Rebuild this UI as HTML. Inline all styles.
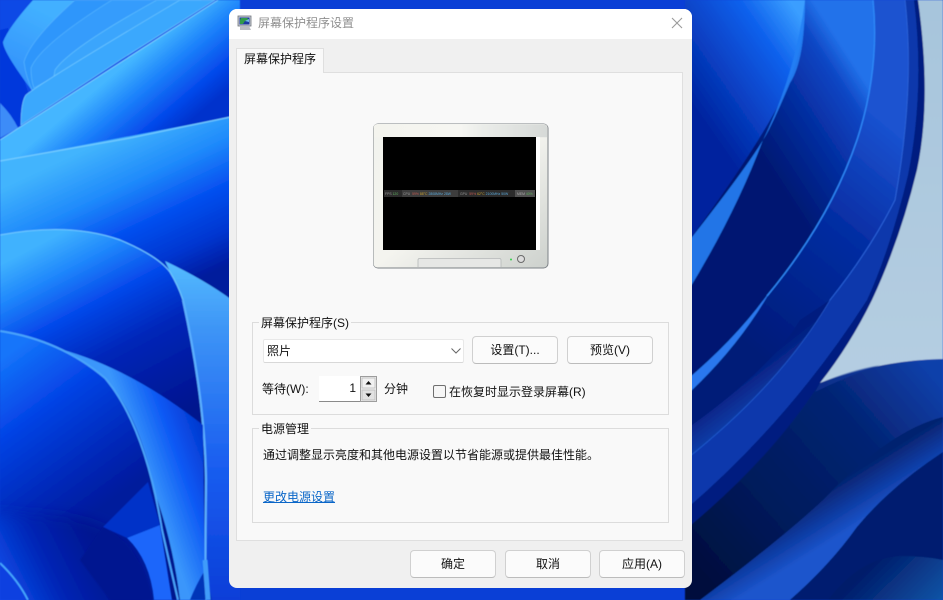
<!DOCTYPE html>
<html lang="zh-CN"><head><meta charset="utf-8"><title>屏幕保护程序设置</title>
<style>
*{box-sizing:border-box;margin:0;padding:0}
html,body{width:943px;height:600px;overflow:hidden;background:#0a3fd0}
body{position:relative;font:12px/16px "Liberation Sans","Noto Sans CJK SC",sans-serif;color:#111}
.a{position:absolute;white-space:nowrap}
#bg{position:absolute;left:0;top:0}
#win{position:absolute;left:229px;top:9px;width:463px;height:579px;background:#f0f0f0;border-radius:8px;overflow:hidden}
#tb{position:absolute;left:0;top:0;width:463px;height:30px;background:#fff}
#panel{position:absolute;left:236px;top:72px;width:447px;height:469px;background:#f9f9f9;border:1px solid #dfdfdf}
#tab{position:absolute;left:236px;top:48px;width:88px;height:25px;background:#f9f9f9;border:1px solid #dfdfdf;border-bottom:0;z-index:2;text-align:center;line-height:21px;color:#111}
.grp{position:absolute;border:1px solid #dcdcdc}
.lg{position:absolute;background:#f9f9f9;padding:0 2px;height:16px;line-height:16px}
.btn{position:absolute;width:86px;height:28px;background:#fbfbfb;border:1px solid #d0d0d0;border-bottom-color:#bcbcbc;border-radius:4px;text-align:center;line-height:26px;color:#111}
</style></head><body>
<svg id="bg" width="943" height="600" viewBox="0 0 943 600" xmlns="http://www.w3.org/2000/svg">
<defs>
<linearGradient id="g1" gradientUnits="userSpaceOnUse" x1="125" y1="65" x2="180" y2="130"><stop offset="0" stop-color="#44b6ff"/><stop offset=".35" stop-color="#1c82fb"/><stop offset=".75" stop-color="#0448ea"/><stop offset="1" stop-color="#0232cc"/></linearGradient>
<linearGradient id="g2" gradientUnits="userSpaceOnUse" x1="95" y1="145" x2="165" y2="295"><stop offset="0" stop-color="#42b4fd"/><stop offset=".3" stop-color="#1f8afb"/><stop offset=".55" stop-color="#0550f0"/><stop offset=".8" stop-color="#0336d0"/><stop offset="1" stop-color="#021a9c"/></linearGradient>
<linearGradient id="g3" gradientUnits="userSpaceOnUse" x1="70" y1="228" x2="170" y2="420"><stop offset="0" stop-color="#40b2fe"/><stop offset=".16" stop-color="#2088fc"/><stop offset=".36" stop-color="#0548ea"/><stop offset=".6" stop-color="#0226b8"/><stop offset="1" stop-color="#01148e"/></linearGradient>
<linearGradient id="g4" gradientUnits="userSpaceOnUse" x1="35" y1="335" x2="140" y2="480"><stop offset="0" stop-color="#1474fa"/><stop offset=".35" stop-color="#0544e6"/><stop offset=".75" stop-color="#0228b8"/><stop offset="1" stop-color="#011a9c"/></linearGradient>
<linearGradient id="g6" gradientUnits="userSpaceOnUse" x1="130" y1="430" x2="200" y2="405"><stop offset="0" stop-color="#3a96fb"/><stop offset=".5" stop-color="#0c58f4"/><stop offset="1" stop-color="#0232c8"/></linearGradient>
<linearGradient id="g7" gradientUnits="userSpaceOnUse" x1="200" y1="263" x2="200" y2="600"><stop offset="0" stop-color="#54baff"/><stop offset=".2" stop-color="#3d94f6"/><stop offset=".6" stop-color="#1a5ef0"/><stop offset="1" stop-color="#0a3ed8"/></linearGradient>
<linearGradient id="nvb" gradientUnits="userSpaceOnUse" x1="5" y1="590" x2="95" y2="545"><stop offset="0" stop-color="#0a4ce8"/><stop offset=".5" stop-color="#0224b4"/><stop offset="1" stop-color="#011690"/></linearGradient>
<linearGradient id="p1" gradientUnits="userSpaceOnUse" x1="60" y1="20" x2="20" y2="100"><stop offset="0" stop-color="#42b0ff"/><stop offset="1" stop-color="#2f8afb"/></linearGradient>
<linearGradient id="r1" gradientUnits="userSpaceOnUse" x1="810" y1="30" x2="695" y2="110"><stop offset="0" stop-color="#3a9eff"/><stop offset=".3" stop-color="#0e60ec"/><stop offset="1" stop-color="#02239e"/></linearGradient>
<linearGradient id="r2" gradientUnits="userSpaceOnUse" x1="878" y1="100" x2="770" y2="170"><stop offset="0" stop-color="#2272ea"/><stop offset=".18" stop-color="#0e46c4"/><stop offset=".5" stop-color="#0630a4"/><stop offset="1" stop-color="#021872"/></linearGradient>
<linearGradient id="r3" gradientUnits="userSpaceOnUse" x1="905" y1="140" x2="740" y2="340"><stop offset="0" stop-color="#1a52d0"/><stop offset=".4" stop-color="#062ea4"/><stop offset="1" stop-color="#021a78"/></linearGradient>
<linearGradient id="r4" gradientUnits="userSpaceOnUse" x1="750" y1="430" x2="720" y2="390"><stop offset="0" stop-color="#1a58cc"/><stop offset="1" stop-color="#031c7c"/></linearGradient>
<linearGradient id="sky" x1="0" y1="0" x2="0" y2="1"><stop offset="0" stop-color="#a7c5dc"/><stop offset="1" stop-color="#bdd3e5"/></linearGradient>
<linearGradient id="nv" gradientUnits="userSpaceOnUse" x1="930" y1="370" x2="700" y2="570"><stop offset="0" stop-color="#0d40aa"/><stop offset=".3" stop-color="#052474"/><stop offset=".7" stop-color="#031a5a"/><stop offset="1" stop-color="#020f3e"/></linearGradient>
<linearGradient id="st" gradientUnits="userSpaceOnUse" x1="825" y1="490" x2="850" y2="530"><stop offset="0" stop-color="#05236f"/><stop offset=".5" stop-color="#0d3aa0"/><stop offset="1" stop-color="#1c55cc"/></linearGradient>
<linearGradient id="dm" gradientUnits="userSpaceOnUse" x1="880" y1="555" x2="935" y2="610"><stop offset="0" stop-color="#031c6a"/><stop offset="1" stop-color="#0e56a8"/></linearGradient>
<linearGradient id="mon" x1="0" y1="0" x2="1" y2="1"><stop offset="0" stop-color="#f2f3ee"/><stop offset=".5" stop-color="#f4f4ef"/><stop offset="1" stop-color="#cdd1cd"/></linearGradient>
<linearGradient id="mt" x1="0" y1="0" x2="1" y2="0"><stop offset="0" stop-color="#f4f4ee"/><stop offset=".5" stop-color="#f6f6f2"/><stop offset=".62" stop-color="#ebedea"/><stop offset="1" stop-color="#d6d9d7"/></linearGradient>
<filter id="b1" x="-5%" y="-5%" width="110%" height="110%"><feGaussianBlur stdDeviation="0.5"/></filter>
<filter id="b2" x="-20%" y="-20%" width="140%" height="140%"><feGaussianBlur stdDeviation="6"/></filter>
</defs>
<rect width="943" height="600" fill="#0a3fd6"/>
<g filter="url(#b1)">
<!-- top-left -->
<rect width="240" height="170" fill="#0a48e6"/>
<path d="M0 30 L8 28 L28 92 L20 128 L0 110Z" fill="#0538dc"/>
<path d="M0 103 Q12 115 18 128 L0 138Z" fill="#3d8cf8"/>
<path d="M33 0 Q8 28 3 42 Q3 52 33 92 L60 60 L110 0Z" fill="url(#p1)"/>
<path d="M75 0 Q30 40 24 62 Q26 78 33 92 L80 60 L150 0Z" fill="#2f96fb" stroke="#55b4ff" stroke-width=".7"/>
<path d="M112 0 Q40 45 31 68 Q31 80 34 88 L120 40 L185 0Z" fill="#349cfc" stroke="#56b6ff" stroke-width=".7"/>
<path d="M157 0 Q70 48 55 70 L54 76 L150 30 L200 0Z" fill="#3aa5fc" stroke="#62c0ff" stroke-width=".7"/>
<path d="M180 0 Q45 80 26 95 Q21 102 21 125 L120 60 L215 0Z" fill="#3ba8fd" stroke="#70c8ff" stroke-width=".7"/>
<!-- petal 1 -->
<path d="M0 140 L218 0 L240 0 L240 117 L0 161Z" fill="url(#g1)"/>
<path d="M0 140 L218 0" stroke="#7ad0ff" stroke-width="1" fill="none"/>
<!-- petal 2 -->
<path d="M0 161 L240 115 L240 320 L0 320Z" fill="url(#g2)"/>
<path d="M0 161 L130 138 L240 115" stroke="#74ccff" stroke-width="1.2" fill="none"/>
<!-- right wedge -->
<path d="M165 261 Q205 280 232 300 L240 310 L240 600 L200 600 L183 300Z" fill="url(#g7)"/>
<!-- dome 3 -->
<path d="M0 235 Q70 222 120 240 Q158 256 170 272 Q178 285 183 300 Q205 400 205 480 L205 600 L0 600Z" fill="url(#g3)"/>
<path d="M0 235 Q70 222 120 240 Q158 256 170 272 Q178 285 183 300" stroke="#6cc6ff" stroke-width="1.2" fill="none"/>
<path d="M183 300 Q205 400 206 480 L205 600" stroke="#5cb0ff" stroke-width="2.2" fill="none"/>
<!-- inner wedge -->
<path d="M60 349 Q130 368 203 425 L205 600 L180 600 Q160 440 60 349Z" fill="url(#g6)"/>
<!-- dome 4 -->
<path d="M0 331 Q60 340 105 378 Q145 420 160 520 L168 600 L0 600Z" fill="url(#g4)"/>
<path d="M0 331 Q60 340 105 378 Q145 425 162 530 L178 600" stroke="#4aa4fb" stroke-width="2" fill="none"/>
</g>
<path d="M-30 515 Q70 510 103 527 L127 538 Q150 560 154 630 L-30 630Z" fill="url(#nvb)" filter="url(#b2)"/>
<g filter="url(#b1)">
<path d="M103 527 L148 482 L160 525 L127 538Z" fill="#0530c8"/>
<path d="M127 538 L160 525 L172 600 L154 600 Q150 560 127 538Z" fill="#1a66fa"/>
<path d="M103 527 Q140 545 153 600 L110 600 L80 560Z" fill="#011690"/>
<path d="M0 563 Q20 585 27 600 L0 600Z" fill="#0a40e0"/>
<path d="M0 563 Q18 580 28 600" stroke="#45a4fb" stroke-width="2" fill="none"/>
<path d="M190 600 Q196 585 205 570 L212 600Z" fill="#0636b8"/>
<path d="M205 560 Q207 585 208 600" stroke="#3f9cfa" stroke-width="5" fill="none"/>
<!-- right side -->
<rect x="685" y="0" width="258" height="600" fill="url(#sky)"/>
<path d="M918 0 Q932 100 917 170 Q900 240 872 300 Q850 345 820 383 L790 600 L685 600 L685 0Z" fill="#031f80"/>
<path d="M914 0 Q925 90 908 175 Q890 250 867 300 Q790 420 685 510 L685 0Z" fill="#0a39ac"/>
<path d="M905 0 Q915 90 895 200 Q870 250 830 300 Q780 385 685 460 L685 0Z" fill="url(#r3)"/>
<path d="M905 0 Q915 90 895 200 Q870 250 830 300 Q780 385 685 460" stroke="#2a62d8" stroke-width="1" fill="none"/>
<path d="M830 300 Q780 385 685 460 L685 430 Q770 370 800 320Z" fill="url(#r4)" opacity=".8"/>
<path d="M873 0 Q880 70 857 140 Q830 220 767 296 Q730 345 685 395 L685 0Z" fill="url(#r2)"/>
<path d="M873 0 Q880 70 857 140 Q830 220 767 296" stroke="#2e88f8" stroke-width="1.4" fill="none"/>
<path d="M767 296 Q735 340 685 382 L685 396 Q735 350 767 296Z" fill="#2a78ee" stroke="#2a78ee" stroke-width="1"/>
<path d="M805 0 Q805 60 773 115 Q745 165 685 246 L685 0Z" fill="url(#r1)"/>
<path d="M805 0 Q805 60 790 83 Q770 130 763 140 Q745 170 685 246 L685 296 Q735 215 763 140 Q795 75 805 0Z" fill="#2480f4" opacity=".9"/>
<!-- navy -->
<path d="M820 383 Q880 360 943 359 L943 600 L685 600 L685 530 Q770 460 820 383Z" fill="url(#nv)"/>
<path d="M820 383 Q850 370 880 365 Q850 375 815 392Z" fill="#0b3aa0" opacity=".5"/>
<path d="M943 417 Q890 430 823 500 Q780 540 700 600 L790 600 Q830 565 857 527 Q890 487 943 452Z" fill="url(#st)"/>
<path d="M943 452 Q890 487 857 527 Q830 565 790 600 L943 600Z" fill="#031c70"/>
<path d="M828 600 Q860 558 900 556 Q925 556 943 560 L943 600Z" fill="url(#dm)"/>
</g>
</svg>

<div id="win"><div id="tb"></div></div>

<svg class="a" style="left:237px;top:15px" width="16" height="17" viewBox="0 0 16 17">
<rect x="1" y="1" width="13" height="10" fill="#c6cad2" stroke="#6f747c" stroke-width=".8"/>
<rect x="2.500" y="2.500" width="10" height="7" fill="#1a38a0"/>
<path d="M4 3h6l2 2-4 1-2 3H3V5z" fill="#2f9a4a"/>
<path d="M8 6l4-2v3z" fill="#6fb9e8"/>
<path d="M3 11l9 0 2 4H3z" fill="#b8bcc2"/>
</svg>
<div class="a" style="left:258px;top:15px;color:#8f8f8f;line-height:17px">屏幕保护程序设置</div>
<svg class="a" style="left:671px;top:17px" width="12" height="12" viewBox="0 0 12 12"><path d="M1 1l10 10M11 1L1 11" stroke="#9a9a9a" stroke-width="1.1" fill="none"/></svg>

<div id="panel"></div>
<div id="tab">屏幕保护程序</div>

<svg class="a" style="left:372px;top:122px" width="178" height="148" viewBox="372 122 178 148" font-family="Liberation Sans" font-size="3.4">
<rect x="373" y="123.500" width="175.500" height="145" rx="5" fill="#7d8287"/>
<rect x="373.500" y="124" width="174" height="143.500" rx="4" fill="url(#mon)"/>
<path d="M378 124.300h165q4 0 4 4v9H373.800v-9q0-4 4-4z" fill="url(#mt)"/>
<rect x="383" y="137" width="153" height="113" fill="#000"/>
<rect x="536" y="137" width="4" height="113" fill="#fdfdfd"/>
<rect x="384" y="190" width="18" height="7" fill="#2c2c2c"/>
<rect x="402" y="190" width="56" height="7" fill="#3d3d3d"/>
<rect x="458" y="190" width="57" height="7" fill="#2c2c2c"/>
<rect x="515" y="190" width="20" height="7" fill="#505050"/>
<text x="385" y="195" fill="#999">FPS <tspan fill="#5fb05f">120</tspan></text>
<text x="403" y="195" fill="#999">CPU <tspan dx="1" fill="#c05a50">59%</tspan><tspan dx="1" fill="#c8a030">88°C</tspan><tspan dx="1" fill="#5aa8d8">2808MHz</tspan><tspan dx="1" fill="#5aa8d8">28W</tspan></text>
<text x="460" y="195" fill="#999">GPU <tspan dx="1" fill="#c05a50">59%</tspan><tspan dx="1" fill="#c8a030">62°C</tspan><tspan dx="1" fill="#5aa8d8">2100MHz</tspan><tspan dx="1" fill="#5aa8d8">50W</tspan></text>
<text x="517" y="195" fill="#aaa">MEM <tspan fill="#5fb05f">40%</tspan></text>
<path d="M418 267v-7q0-1.500 1.500-1.500h80q1.500 0 1.500 1.500v7" fill="#e6e7e5" stroke="#b5b8b8" stroke-width=".8"/>
<circle cx="511" cy="259.500" r="1" fill="#35d04a"/>
<circle cx="521" cy="259" r="3.500" fill="#dcdcdc" stroke="#6a6a6a" stroke-width="1"/>
</svg>

<div class="grp" style="left:252px;top:322px;width:417px;height:93px"></div>
<div class="lg" style="left:259px;top:315px">屏幕保护程序(S)</div>

<div class="a" style="left:263px;top:339px;width:201px;height:24px;background:#fff;border:1px solid #e8e8e8;border-bottom-color:#d8d8d8;border-radius:2px;padding-left:3px;line-height:22px">照片</div>
<svg class="a" style="left:450px;top:347px" width="12" height="8" viewBox="0 0 12 8"><path d="M1.500 1.500L6 6l4.500-4.500" stroke="#666" stroke-width="1" fill="none"/></svg>
<div class="btn" style="left:472px;top:336px">设置(T)...</div>
<div class="btn" style="left:567px;top:336px">预览(V)</div>

<div class="a" style="left:262px;top:381px">等待(W):</div>
<div class="a" style="left:319px;top:376px;width:41px;height:26px;background:#fff;border-bottom:1px solid #8a8a8a;text-align:right;padding-right:4px;line-height:24px">1</div>
<svg class="a" style="left:360px;top:376px" width="17" height="26" viewBox="0 0 17 26">
<rect x=".5" y=".5" width="16" height="25" fill="#eee" stroke="#9d9d9d"/>
<rect x="2" y="2" width="13" height="10" fill="#f1f1f1" stroke="#bcbcbc" stroke-width=".8"/>
<rect x="2" y="14" width="13" height="10" fill="#e2e2e2" stroke="#bcbcbc" stroke-width=".8"/>
<path d="M8.500 5l3 3.500h-6zM8.500 21l3-3.500h-6z" fill="#111"/>
</svg>
<div class="a" style="left:384px;top:381px">分钟</div>
<div class="a" style="left:433px;top:385px;width:13px;height:13px;background:#f6f6f6;border:1px solid #6f6f6f;border-radius:2px"></div>
<div class="a" style="left:449px;top:384px">在恢复时显示登录屏幕(R)</div>

<div class="grp" style="left:252px;top:428px;width:417px;height:95px"></div>
<div class="lg" style="left:259px;top:421px">电源管理</div>
<div class="a" style="left:263px;top:447px">通过调整显示亮度和其他电源设置以节省能源或提供最佳性能。</div>
<div class="a" style="left:263px;top:489px;color:#0a66c8;text-decoration:underline">更改电源设置</div>

<div class="btn" style="left:410px;top:550px">确定</div>
<div class="btn" style="left:505px;top:550px">取消</div>
<div class="btn" style="left:599px;top:550px">应用(A)</div>
</body></html>
